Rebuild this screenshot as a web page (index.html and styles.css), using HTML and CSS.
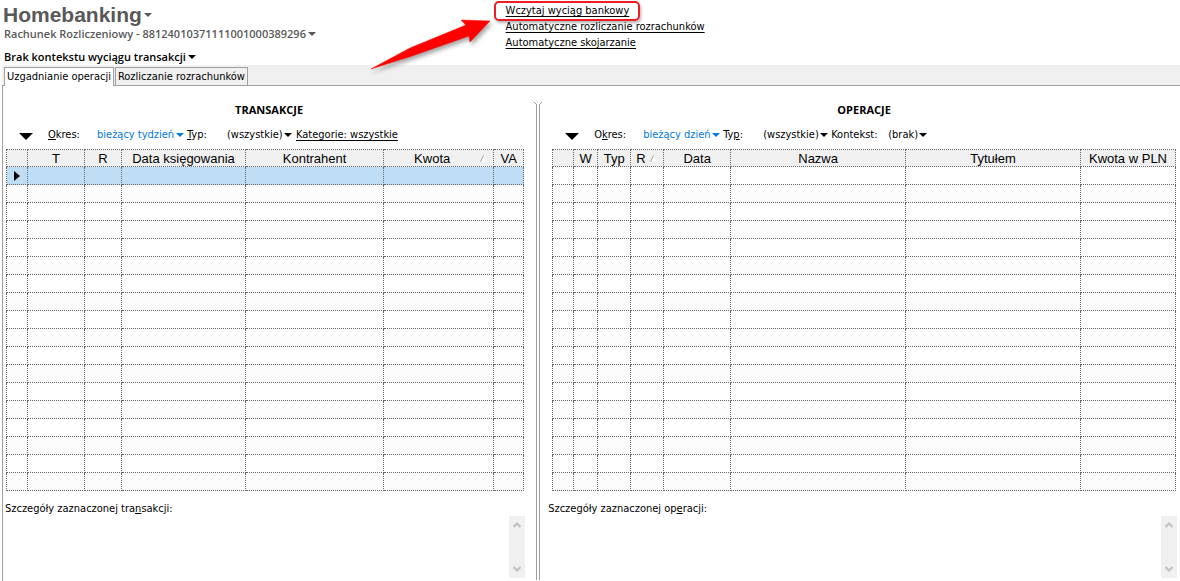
FILE: index.html
```html
<!DOCTYPE html>
<html lang="pl">
<head>
    <meta charset="UTF-8">
    <meta name="viewport" content="width=device-width, initial-scale=1.0">
    <title>Homebanking</title>
    <link rel="stylesheet" href="styles.css">
</head>
<body>
    <!-- Nagłówek -->
    <header class="header">
        <div class="titles">
            <h1><button type="button" class="menu-btn title">Homebanking</button></h1>
            <button type="button" class="menu-btn account">Rachunek Rozliczeniowy - 88124010371111001000389296</button>
            <button type="button" class="menu-btn context">Brak kontekstu wyciągu transakcji</button>
        </div>
        <nav class="actions">
            <a href="#" class="marked">Wczytaj wyciąg bankowy</a>
            <a href="#">Automatyczne rozliczanie rozrachunków</a>
            <a href="#">Automatyczne skojarzanie</a>
            <svg class="arrow" width="130" height="64" viewBox="0 0 130 64">
                <path d="M1 53 L40 32 L96 9 L91 4 L120 5 L100 26 L99 20 L42 40 Z" fill="#f00" stroke="#f00" stroke-width="0.5"/>
            </svg>
        </nav>
    </header>

    <!-- Zakładki -->
    <div class="tabs">
        <button type="button" class="tab active">Uzgadnianie operacji</button>
        <button type="button" class="tab">Rozliczanie rozrachunków</button>
    </div>

    <main class="panels">
        <section class="panel transactions">
            <h2>TRANSAKCJE</h2>
            <div class="filters">
                <button type="button" class="toggle" aria-label="Filtry"></button>
                <label for="t-period" class="period"><u>O</u>kres:</label>
                <span class="select blue"><select id="t-period"><option>bieżący tydzień</option></select></span>
                <label for="t-type" class="type"><u>T</u>yp:</label>
                <span class="select"><select id="t-type"><option>(wszystkie)</option></select></span>
                <a href="#" class="categories">Kategorie: wszystkie</a>
            </div>
            <table class="grid" id="transactions">
                <colgroup><col class="w21"><col class="w57"><col class="w37"><col class="w124"><col><col class="w110"><col class="w30"></colgroup>
                <thead>
                    <tr><th></th><th>T</th><th>R</th><th>Data księgowania</th><th>Kontrahent</th><th class="sorted">Kwota</th><th>VA</th></tr>
                </thead>
                <tbody></tbody>
            </table>
            <label for="t-details" class="details-label">Szczegóły zaznaczonej tra<u>n</u>sakcji:</label>
            <div class="details">
                <textarea id="t-details" readonly></textarea>
                <div class="scroll">
                    <svg width="8" height="6" viewBox="0 0 8 6"><path d="M0.5 5 L4 1.5 L7.5 5"/></svg>
                    <svg width="8" height="6" viewBox="0 0 8 6"><path d="M0.5 1 L4 4.5 L7.5 1"/></svg>
                </div>
            </div>
        </section>

        <div class="splitter">
            <svg width="8" height="3" viewBox="0 0 8 3"><path d="M0 0 L3 3 M8 0 L5 3" stroke="#a0a0a0"/></svg>
        </div>

        <section class="panel operations">
            <h2>OPERACJE</h2>
            <div class="filters">
                <button type="button" class="toggle" aria-label="Filtry"></button>
                <label for="o-period" class="period">O<u>k</u>res:</label>
                <span class="select blue"><select id="o-period"><option>bieżący dzień</option></select></span>
                <label for="o-type" class="type">Ty<u>p</u>:</label>
                <span class="select"><select id="o-type"><option>(wszystkie)</option></select></span>
                <label for="o-context" class="ctx">Kontekst:</label>
                <span class="select"><select id="o-context"><option>(brak)</option></select></span>
            </div>
            <table class="grid" id="operations">
                <colgroup><col class="w21"><col class="w24"><col class="w33"><col class="w33"><col class="w67"><col><col><col class="w95"></colgroup>
                <thead>
                    <tr><th></th><th>W</th><th>Typ</th><th class="sorted left">R</th><th>Data</th><th>Nazwa</th><th>Tytułem</th><th>Kwota w PLN</th></tr>
                </thead>
                <tbody></tbody>
            </table>
            <label for="o-details" class="details-label">Szczegóły zaznaczonej op<u>e</u>racji:</label>
            <div class="details">
                <textarea id="o-details" readonly></textarea>
                <div class="scroll">
                    <svg width="8" height="6" viewBox="0 0 8 6"><path d="M0.5 5 L4 1.5 L7.5 5"/></svg>
                    <svg width="8" height="6" viewBox="0 0 8 6"><path d="M0.5 1 L4 4.5 L7.5 1"/></svg>
                </div>
            </div>
        </section>
    </main>

    <script>
        // Puste wiersze tabeli
        function fillRows(id, count) {
            var table = document.getElementById(id);
            var columns = table.querySelectorAll("th").length;
            for (var i = 0; i < count; i++) {
                var row = table.tBodies[0].insertRow();
                for (var j = 0; j < columns; j++) {
                    row.insertCell();
                }
            }
        }

        // Znacznik kierunku sortowania
        function addSortMarks() {
            document.querySelectorAll(".sorted").forEach(function(th) {
                th.insertAdjacentHTML("beforeend",
                    '<svg width="7" height="8" viewBox="0 0 7 8">' +
                    '<path d="M0.5 7 L3.5 0.5 L6.5 7 Z" fill="#fff"/>' +
                    '<path d="M0.5 7 L3.5 0.5" stroke="#a0a0a0"/></svg>');
            });
        }

        fillRows("transactions", 18);
        fillRows("operations", 18);
        addSortMarks();
        document.querySelector("#transactions tbody tr").classList.add("selected");
    </script>
</body>
</html>
```

FILE: styles.css
```css
* {
    box-sizing: border-box;
}

body {
    margin: 0;
    min-height: 100vh;
    display: flex;
    flex-direction: column;
    background-color: #fff;
    color: #000;
    font-family: Tahoma, "DejaVu Sans Condensed", "DejaVu Sans", sans-serif;
    font-size: 11px;
    line-height: 14px;
}

button, select, textarea {
    font: inherit;
    color: inherit;
    background: none;
    border: none;
    border-radius: 0;
    padding: 0;
    margin: 0;
}

h1, h2 {
    margin: 0;
}

a {
    color: #000;
    text-decoration: underline;
    text-decoration-skip-ink: none;
    text-underline-offset: 2px;
}

/* Nagłówek */
.header {
    display: flex;
    height: 65px;
}

.titles {
    width: 42%;
    padding: 3px 4px 0;
    display: flex;
    flex-direction: column;
    align-items: flex-start;
}

.titles h1 {
    font-size: 21px;
    line-height: 24px;
    margin-left: -1px;
}

.menu-btn {
    display: flex;
    align-items: center;
    gap: 2px;
    font-family: "Open Sans", "Noto Sans", sans-serif;
    font-weight: 600;
    white-space: nowrap;
}

.menu-btn::after,
.select::after {
    content: "";
    border: 4px solid transparent;
    border-top: 4px solid currentColor;
    border-bottom: none;
}

.title {
    font-family: "Liberation Sans", Arial, sans-serif;
}

.title, .account {
    color: #595959;
}

.account {
    line-height: 13px;
}

.context {
    margin-top: 10px;
}

.actions {
    position: relative;
    padding: 3px 10px 0;
    display: flex;
    flex-direction: column;
    align-items: flex-start;
    line-height: 16px;
}

.marked {
    position: relative;
}

/* Czerwona ramka i strzałka */
.marked::after {
    content: "";
    position: absolute;
    inset: -2px -11px -2px -12px;
    border: 2px solid #ee1c24;
    border-radius: 5px;
    box-shadow: 1px 2px 3px rgba(0, 0, 0, 0.3);
}

.arrow {
    position: absolute;
    top: 16px;
    left: -126px;
    filter: drop-shadow(2px 3px 2px rgba(0, 0, 0, 0.35));
}

/* Zakładki */
.tabs {
    display: flex;
    gap: 1px;
    margin-left: 2px;
    padding: 2px 2px 0;
    background-color: #f0f0f0;
    border-bottom: 1px solid #a0a0a0;
}

.tab {
    height: 18px;
    padding: 0 2px;
    border: 1px solid #a0a0a0;
    border-bottom: none;
}

.tab.active {
    height: 19px;
    margin-bottom: -1px;
    background-color: #fff;
}

/* Panele */
.panels {
    flex: 1;
    display: grid;
    grid-template-columns: 5fr 4px 6fr;
    margin-left: 2px;
    border-left: 1px solid #a0a0a0;
}

.panel {
    display: flex;
    flex-direction: column;
    min-width: 0;
    padding-top: 17px;
}

.transactions {
    padding-left: 3px;
    padding-right: 12px;
}

.operations {
    padding-left: 12px;
    padding-right: 4px;
}

.panel h2 {
    font-family: "Open Sans", "Noto Sans", sans-serif;
    font-size: 11px;
    line-height: 14px;
    text-align: center;
}

.transactions h2 {
    margin-right: -8px;
}

.splitter {
    position: relative;
    margin-top: 19px;
    margin-bottom: 1px;
    border-left: 1px solid #a0a0a0;
    border-right: 1px solid #a0a0a0;
}

.splitter svg {
    position: absolute;
    top: -3px;
    left: -3px;
}

/* Filtry */
.filters {
    display: flex;
    align-items: center;
    height: 32px;
    padding-top: 3px;
    padding-left: 13px;
    white-space: nowrap;
}

.toggle {
    border: 7px solid transparent;
    border-top: 7px solid #000;
    border-bottom: none;
    margin-top: 3px;
    margin-right: 15px;
}

.period {
    width: 49px;
}

.type {
    width: 40px;
    margin-left: 3px;
}

.ctx {
    width: 57px;
    margin-left: 3px;
}

.categories {
    margin-left: 4px;
}

.select {
    display: flex;
    align-items: center;
    gap: 1px;
}

.select select {
    appearance: none;
}

.blue {
    color: #0078d7;
}

/* Tabele */
.grid {
    width: 100%;
    table-layout: fixed;
    border-collapse: collapse;
}

.grid th, .grid td {
    height: 18px;
    padding: 0;
    border: 1px dotted #666;
}

.grid th {
    height: 17px;
    padding-top: 1px;
    background-color: #f0f0f0;
    font-family: "Liberation Sans", Arial, sans-serif;
    font-size: 13px;
    font-weight: normal;
    line-height: 15px;
    white-space: nowrap;
}

.grid tr:nth-child(even) td {
    background-color: #fcfcfc;
}

.grid .selected td {
    background-color: #bfddf5;
}

.selected td:first-child::before {
    content: "";
    display: block;
    width: 0;
    margin-left: 7px;
    border: 5px solid transparent;
    border-left: 6px solid #000;
    border-right: none;
}

.sorted svg {
    float: right;
    margin: 4px 6px 0 0;
}

.grid .left {
    text-align: left;
    padding-left: 5px;
}

.w21 { width: 21px; }
.w24 { width: 24px; }
.w30 { width: 30px; }
.w33 { width: 33px; }
.w37 { width: 37px; }
.w57 { width: 57px; }
.w67 { width: 67px; }
.w95 { width: 95px; }
.w110 { width: 110px; }
.w124 { width: 124px; }

/* Szczegóły */
.details-label {
    margin-top: 11px;
    margin-left: -1px;
}

.operations .details-label {
    margin-left: -4px;
}

.details {
    flex: 1;
    display: flex;
    min-height: 62px;
    margin: 0 -1px 3px 0;
}

.details textarea {
    flex: 1;
    min-width: 0;
    resize: none;
    outline: none;
}

.scroll {
    width: 16px;
    padding: 6px 0;
    display: flex;
    flex-direction: column;
    align-items: center;
    justify-content: space-between;
    background-color: #f0f0f0;
}

.scroll path {
    fill: none;
    stroke: #bfbfbf;
    stroke-width: 2;
}
```
